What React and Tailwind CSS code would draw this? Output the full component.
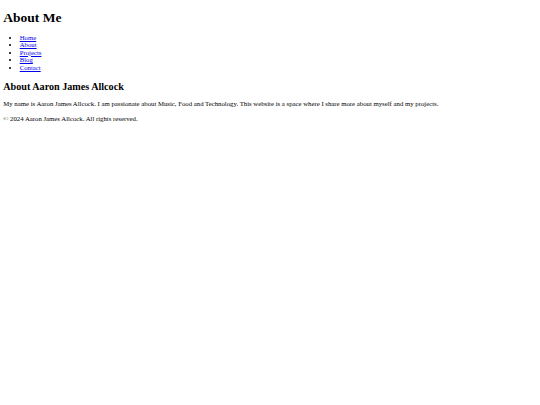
import React from "react";

// 기본 스타일 그대로의 개인 소개 페이지 (축소 비율 약 0.41)
const navItems = ["Home", "About", "Projects", "Blog", "Contact"];

const App = () => {
  return (
    <div className="min-h-[405px] bg-white px-[3.3px] py-px text-black font-['Liberation_Serif','Times_New_Roman',serif] text-[6.76px] leading-[7.54px]">
      <header>
        <h1 className="text-[13.5px] font-bold my-[8.8px] leading-[15.1px]">About Me</h1>
        <nav>
          <ul className="list-disc pl-[16.4px] my-[6.6px]">
            {navItems.map((item) => (
              <li key={item}>
                <a href="#" className="text-[#0000EE] underline">
                  {item}
                </a>
              </li>
            ))}
          </ul>
        </nav>
      </header>

      <main>
        <section>
          <h2 className="text-[10.13px] font-bold mt-[9.5px] mb-[8.2px] leading-[11.3px]">About Aaron James Allcock</h2>
          <p className="my-[6.9px]">
            My name is Aaron James Allcock. I am passionate about Music, Food and Technology. This website is a space
            where I share more about myself and my projects.
          </p>
        </section>
      </main>

      <footer>
        <p className="my-[6.9px]">© 2024 Aaron James Allcock. All rights reserved.</p>
      </footer>
    </div>
  );
};

export default App;
